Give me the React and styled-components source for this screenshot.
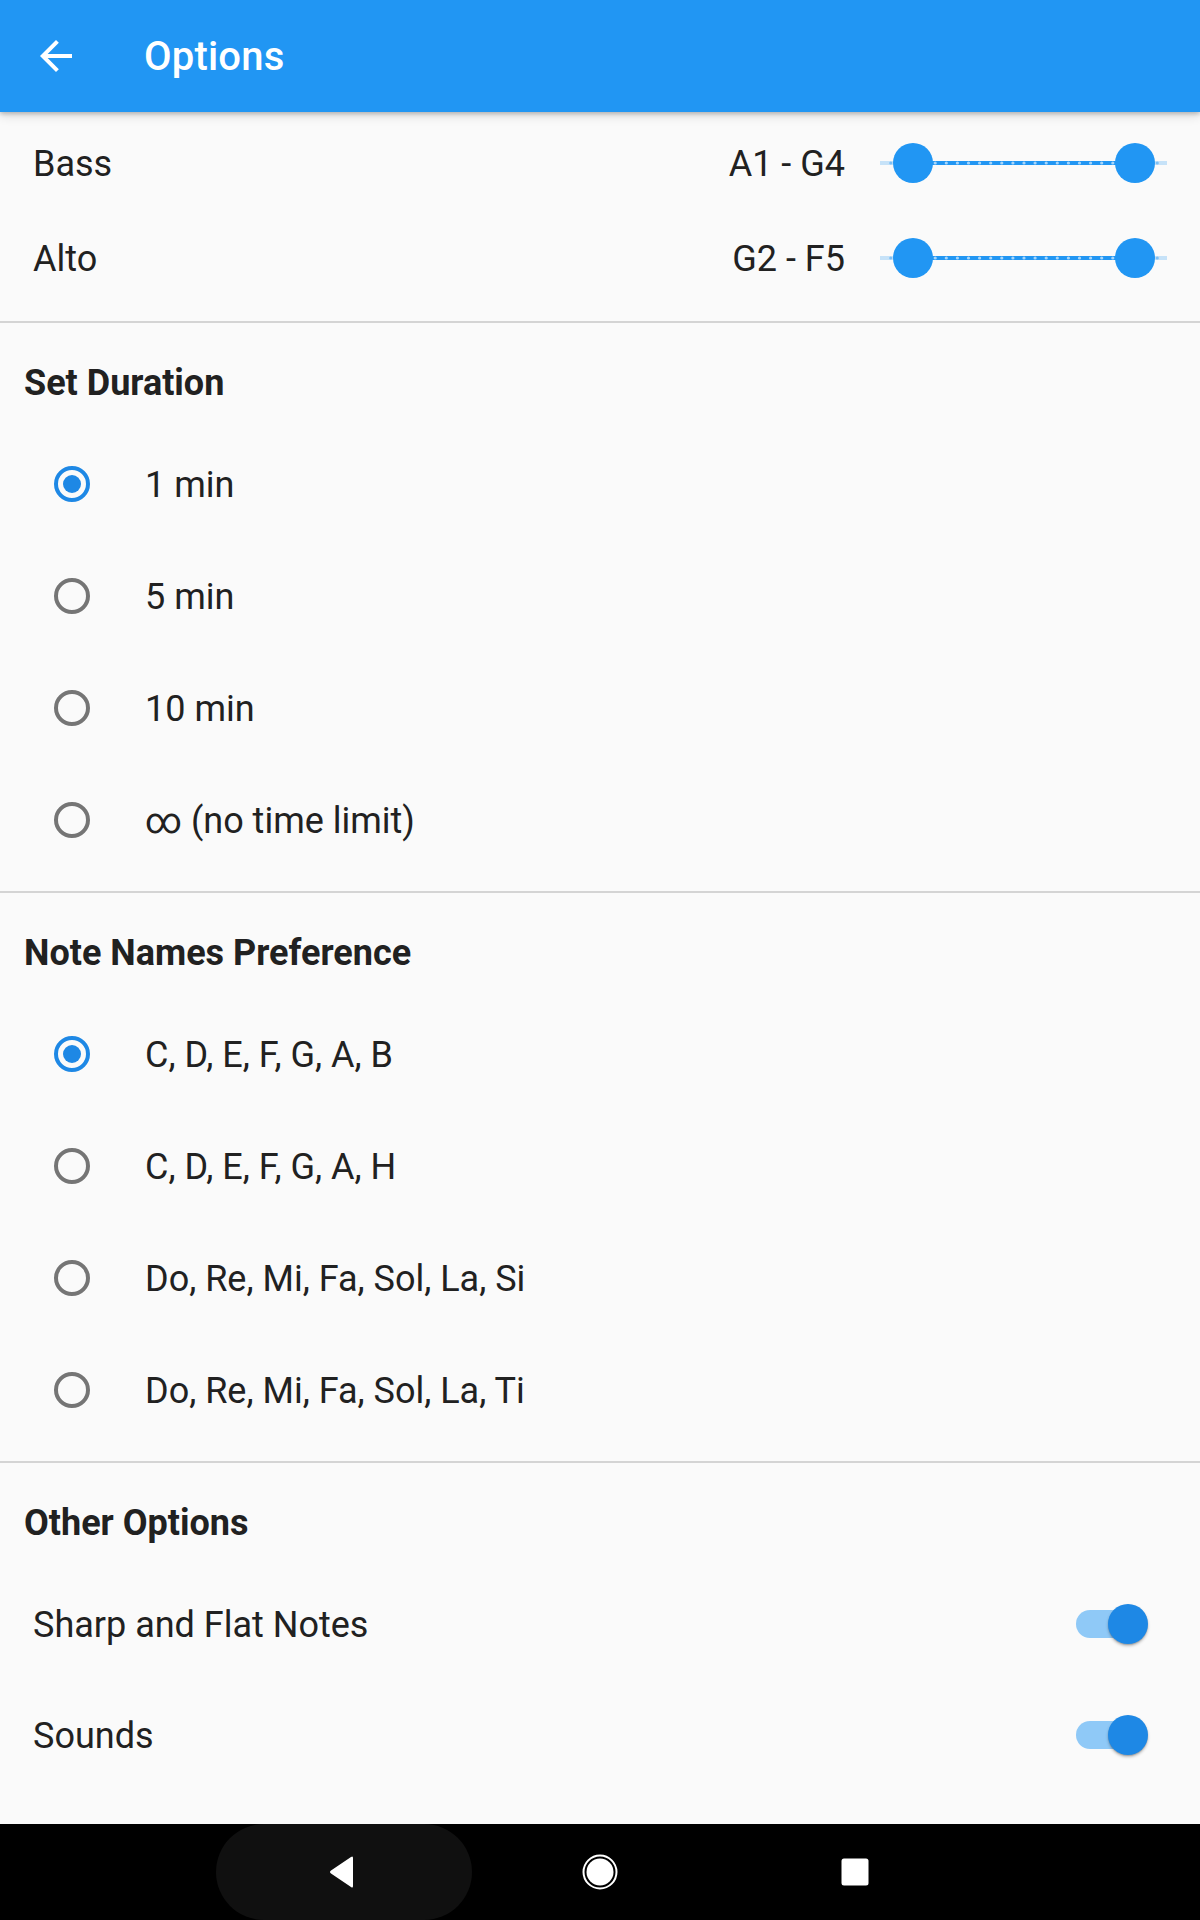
import React from "react";
import styled, { createGlobalStyle } from "styled-components";

const GlobalStyle = createGlobalStyle`
  html, body { margin: 0; padding: 0; background: #fafafa; }
  body { font-family: Roboto, "Noto Sans", "Liberation Sans", sans-serif; color: #212121; }
  * { box-sizing: border-box; }
`;

const Page = styled.div`
  min-height: 1920px;
  display: flex;
  flex-direction: column;
  background: #fafafa;
`;

const AppBar = styled.header`
  height: 112px;
  background: #2196f3;
  display: flex;
  align-items: center;
  padding-left: 32px;
  box-shadow: 0 2px 4px rgba(0, 0, 0, 0.2), 0 4px 10px rgba(0, 0, 0, 0.12);
  position: relative;
  z-index: 2;
`;

const BackButton = styled.div`
  width: 48px;
  height: 48px;
  display: flex;
  align-items: center;
  justify-content: center;
`;

const Title = styled.h1`
  margin: 0 0 0 64px;
  font-size: 40px;
  font-weight: 500;
  color: #fff;
  letter-spacing: 0.2px;
`;

const Content = styled.main`
  flex: 1;
  display: flex;
  flex-direction: column;
`;

const SliderBlock = styled.div`
  padding: 3px 0 16px;
`;

const SliderRow = styled.div`
  height: 95px;
  display: flex;
  align-items: center;
  padding: 0 33px;
`;

const RowLabel = styled.span`
  flex: 1;
  font-size: 36px;
  padding-top: 2px;
  color: #212121;
`;

const RangeText = styled.span`
  font-size: 36px;
  padding-top: 2px;
  color: #212121;
  margin-right: 35px;
`;

const Divider = styled.hr`
  margin: 0;
  border: none;
  height: 2px;
  background: #d4d4d4;
`;

const Section = styled.section`
  padding-bottom: ${(p) => (p.$last ? "0" : "16px")};
`;

const SectionHeader = styled.h2`
  margin: 0;
  height: 104px;
  padding: 40px 0 0 24px;
  font-size: 36px;
  line-height: 40px;
  font-weight: 700;
  color: #212121;
`;

const RadioRow = styled.label`
  height: 112px;
  display: flex;
  align-items: center;
  padding-left: 54px;
  padding-top: 1px;
`;

const RadioCircle = styled.span`
  width: 36px;
  height: 36px;
  border-radius: 50%;
  border: 4px solid ${(p) => (p.$checked ? "#1e88e5" : "#757575")};
  display: flex;
  align-items: center;
  justify-content: center;
  flex-shrink: 0;
  &::after {
    content: "";
    width: 18px;
    height: 18px;
    border-radius: 50%;
    background: #1e88e5;
    display: ${(p) => (p.$checked ? "block" : "none")};
  }
`;

const RadioLabel = styled.span`
  margin-left: 55px;
  padding-top: 2px;
  font-size: 36px;
  color: #212121;
`;

const SwitchRow = styled.div`
  height: ${(p) => (p.$tall ? "112px" : "111px")};
  display: flex;
  align-items: center;
  padding: 1px 52px 0 33px;
`;

const SwitchTrack = styled.span`
  position: relative;
  width: 66px;
  height: 28px;
  border-radius: 14px;
  background: #8fc9f7;
  display: block;
  margin-right: 6px;
`;

const SwitchThumb = styled.span`
  position: absolute;
  right: -6px;
  top: -6px;
  width: 40px;
  height: 40px;
  border-radius: 50%;
  background: #1e88e5;
  box-shadow: 0 2px 3px rgba(0, 0, 0, 0.25), 0 1px 1px rgba(0, 0, 0, 0.15);
`;

const NavBar = styled.nav`
  height: 96px;
  background: #000;
  display: flex;
  align-items: center;
  position: relative;
`;

const BackPill = styled.div`
  position: absolute;
  left: 216px;
  top: 0;
  width: 256px;
  height: 96px;
  border-radius: 48px;
  background: #101010;
`;

const NavButton = styled.div`
  position: absolute;
  top: 0;
  left: ${(p) => p.$x}px;
  width: 60px;
  height: 96px;
  margin-left: -30px;
  display: flex;
  align-items: center;
  justify-content: center;
`;

const RangeSlider = () => {
  const w = 287;
  const cy = 24;
  const a = 33;
  const b = 255;
  const step = (b - a) / 20;
  const ticks = [];
  for (let k = -2; k <= 22; k++) {
    const x = a + k * step;
    if (x < 3 || x > w - 3) continue;
    const active = x > a && x < b;
    ticks.push(
      <circle
        key={k}
        cx={x}
        cy={cy}
        r={1.6}
        fill={active ? "rgba(255,255,255,0.6)" : "rgba(33,150,243,0.45)"}
      />
    );
  }
  return (
    <svg width={w} height={48} viewBox={`0 0 ${w} 48`}>
      <rect x={0} y={cy - 2} width={w} height={4} fill="rgba(33,150,243,0.24)" />
      <rect x={a} y={cy - 2} width={b - a} height={4} fill="#2196f3" />
      {ticks}
      <circle cx={a} cy={cy} r={20} fill="#2196f3" />
      <circle cx={b} cy={cy} r={20} fill="#2196f3" />
    </svg>
  );
};

const Radio = ({ checked, children }) => (
  <RadioRow>
    <RadioCircle $checked={checked} />
    <RadioLabel>{children}</RadioLabel>
  </RadioRow>
);

const Switch = () => (
  <SwitchTrack>
    <SwitchThumb />
  </SwitchTrack>
);

export default function App() {
  return (
    <Page>
      <GlobalStyle />
      <AppBar>
        <BackButton>
          <svg width="48" height="48" viewBox="0 0 24 24">
            <path
              fill="#fff"
              d="M20 11H7.83l5.59-5.59L12 4l-8 8 8 8 1.41-1.41L7.83 13H20v-2z"
            />
          </svg>
        </BackButton>
        <Title>Options</Title>
      </AppBar>
      <Content>
        <SliderBlock>
          <SliderRow>
            <RowLabel>Bass</RowLabel>
            <RangeText>A1 - G4</RangeText>
            <RangeSlider />
          </SliderRow>
          <SliderRow>
            <RowLabel>Alto</RowLabel>
            <RangeText>G2 - F5</RangeText>
            <RangeSlider />
          </SliderRow>
        </SliderBlock>
        <Divider />
        <Section>
          <SectionHeader>Set Duration</SectionHeader>
          <Radio checked>1 min</Radio>
          <Radio>5 min</Radio>
          <Radio>10 min</Radio>
          <Radio>∞ (no time limit)</Radio>
        </Section>
        <Divider />
        <Section>
          <SectionHeader>Note Names Preference</SectionHeader>
          <Radio checked>C, D, E, F, G, A, B</Radio>
          <Radio>C, D, E, F, G, A, H</Radio>
          <Radio>Do, Re, Mi, Fa, Sol, La, Si</Radio>
          <Radio>Do, Re, Mi, Fa, Sol, La, Ti</Radio>
        </Section>
        <Divider />
        <Section $last>
          <SectionHeader>Other Options</SectionHeader>
          <SwitchRow $tall>
            <RowLabel>Sharp and Flat Notes</RowLabel>
            <Switch />
          </SwitchRow>
          <SwitchRow>
            <RowLabel>Sounds</RowLabel>
            <Switch />
          </SwitchRow>
        </Section>
      </Content>
      <NavBar>
        <BackPill />
        <NavButton $x={342}>
          <svg width="32" height="34" viewBox="0 0 32 34">
            <path
              d="M27 3 L27 31 Q27 33.5 25 32 L5 18.5 Q3 17 5 15.5 L25 2 Q27 0.5 27 3 Z"
              fill="#fff"
            />
          </svg>
        </NavButton>
        <NavButton $x={600}>
          <svg width="38" height="38" viewBox="0 0 38 38">
            <circle cx="19" cy="19" r="16.5" fill="none" stroke="#fff" strokeWidth="2" />
            <circle cx="19" cy="19" r="13.5" fill="#fff" />
          </svg>
        </NavButton>
        <NavButton $x={855}>
          <svg width="30" height="30" viewBox="0 0 30 30">
            <rect x="1.5" y="1.5" width="27" height="27" rx="2.5" fill="#fff" />
          </svg>
        </NavButton>
      </NavBar>
    </Page>
  );
}
